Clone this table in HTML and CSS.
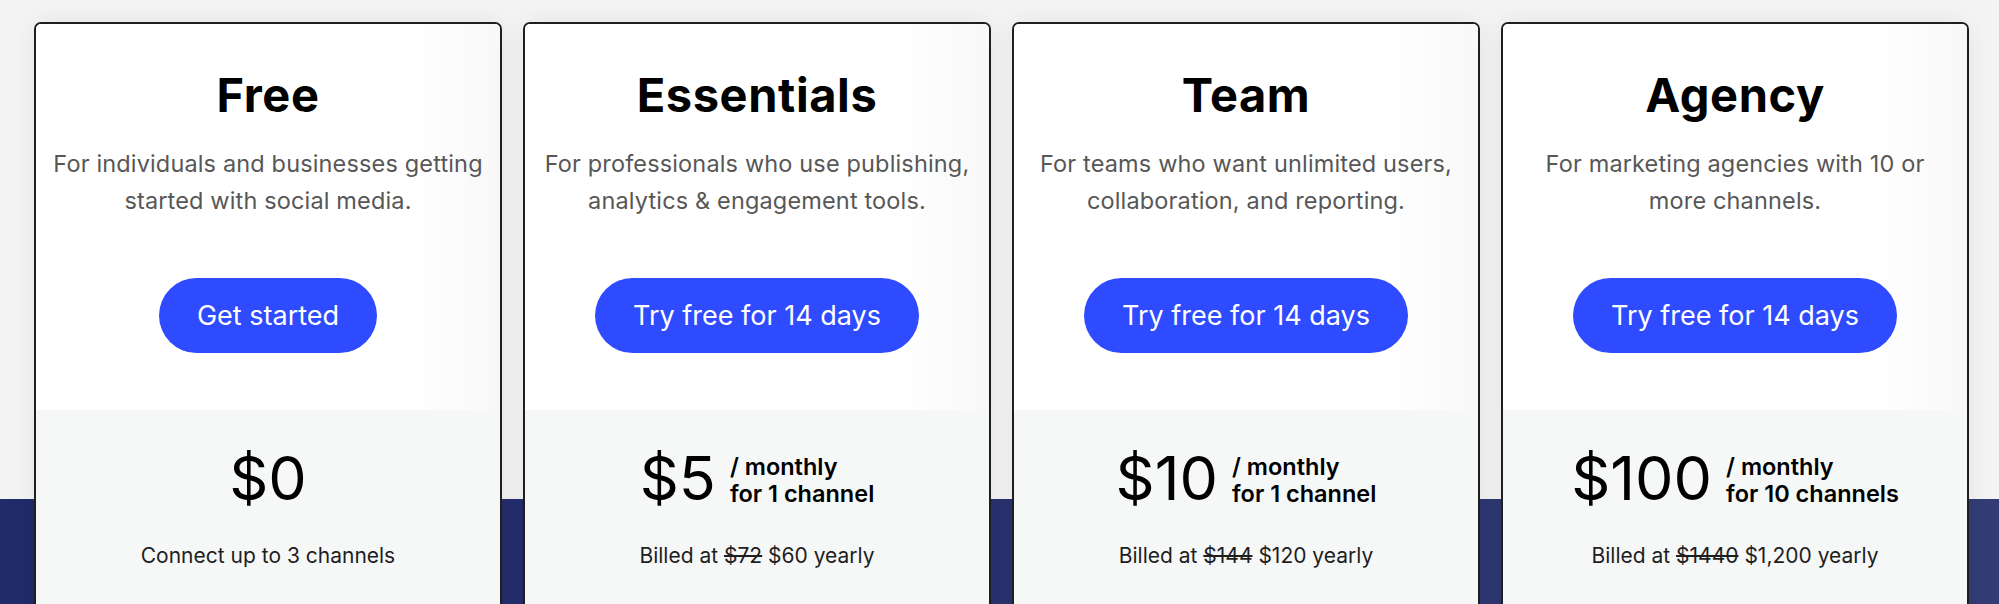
FILE: index.html
```html
<!DOCTYPE html>
<html lang="en">
<head>
<meta charset="utf-8">
<title>Pricing</title>
<link rel="stylesheet" href="styles.css">
</head>
<body>
<main class="page">
  <section class="plans">
    <article class="card">
      <div class="card-top">
        <h2 class="plan-name">Free</h2>
        <p class="plan-desc">For individuals and businesses getting<br>started with social media.</p>
        <a class="cta" href="#">Get started</a>
      </div>
      <div class="card-bottom">
        <div class="price-row">
          <span class="price">$0</span>
        </div>
        <p class="billing">Connect up to 3 channels</p>
      </div>
    </article>

    <article class="card">
      <div class="card-top">
        <h2 class="plan-name">Essentials</h2>
        <p class="plan-desc">For professionals who use publishing,<br>analytics &amp; engagement tools.</p>
        <a class="cta" href="#">Try free for 14 days</a>
      </div>
      <div class="card-bottom">
        <div class="price-row">
          <span class="price">$5</span>
          <span class="per">/ monthly<br>for 1 channel</span>
        </div>
        <p class="billing">Billed at <s>$72</s> $60 yearly</p>
      </div>
    </article>

    <article class="card">
      <div class="card-top">
        <h2 class="plan-name">Team</h2>
        <p class="plan-desc">For teams who want unlimited users,<br>collaboration, and reporting.</p>
        <a class="cta" href="#">Try free for 14 days</a>
      </div>
      <div class="card-bottom">
        <div class="price-row">
          <span class="price">$10</span>
          <span class="per">/ monthly<br>for 1 channel</span>
        </div>
        <p class="billing">Billed at <s>$144</s> $120 yearly</p>
      </div>
    </article>

    <article class="card">
      <div class="card-top">
        <h2 class="plan-name">Agency</h2>
        <p class="plan-desc">For marketing agencies with 10 or<br>more channels.</p>
        <a class="cta" href="#">Try free for 14 days</a>
      </div>
      <div class="card-bottom">
        <div class="price-row">
          <span class="price">$100</span>
          <span class="per">/ monthly<br>for 10 channels</span>
        </div>
        <p class="billing">Billed at <s>$1440</s> $1,200 yearly</p>
      </div>
    </article>
  </section>
</main>
</body>
</html>
```

FILE: styles.css
```css
* { box-sizing: border-box; }

html, body {
  margin: 0;
  padding: 0;
}

body {
  font-family: Inter, "Noto Sans", "Liberation Sans", sans-serif;
  color: #111;
}

.page {
  height: 604px;
  overflow: hidden;
  background:
    linear-gradient(to right, #212a6b, #333c75) left bottom / 100% 105px no-repeat,
    #f4f4f4;
}

.plans {
  display: grid;
  grid-template-columns: repeat(4, 468px);
  gap: 21px;
  padding: 22px 0 0 34px;
}

.card {
  height: 700px;
  background: #fff;
  border: 2px solid #1f1f1f;
  border-radius: 7px;
  overflow: hidden;
  box-shadow: 0 0 28px rgba(0, 0, 0, 0.07);
}

.card-top {
  height: 386px;
  padding: 43px 4px 0;
  text-align: center;
  display: flex;
  flex-direction: column;
  align-items: center;
  background: linear-gradient(to right, #fff 80%, #f8f8f8);
}

.plan-name {
  margin: 0;
  font-size: 47px;
  line-height: 56px;
  font-weight: 700;
  color: #000;
  letter-spacing: 0.6px;
}

.plan-desc {
  margin: 22px 0 0;
  font-size: 23.5px;
  line-height: 37px;
  color: #575757;
  letter-spacing: 0.15px;
  white-space: nowrap;
}

.cta {
  margin-top: 59px;
  height: 75px;
  padding: 0 38px;
  border-radius: 38px;
  background: #2f4bff;
  color: #fff;
  font-size: 27px;
  line-height: 75px;
  text-decoration: none;
  white-space: nowrap;
}

.card-bottom {
  height: 100%;
  background: #f6f8f8;
  padding-top: 36px;
  text-align: center;
}

.price-row {
  display: flex;
  justify-content: center;
  align-items: center;
  gap: 14px;
  height: 62px;
}

.price {
  font-size: 61px;
  line-height: 62px;
  font-weight: 400;
  color: #000;
  padding-top: 2px;
}

.per {
  margin-top: 5px;
  text-align: left;
  font-size: 23.5px;
  line-height: 27px;
  font-weight: 600;
  color: #000;
}

.billing {
  margin: 33px 0 0;
  font-size: 21px;
  line-height: 30px;
  color: #1e1e1e;
}

.billing s {
  text-decoration-thickness: 1.5px;
}
```
